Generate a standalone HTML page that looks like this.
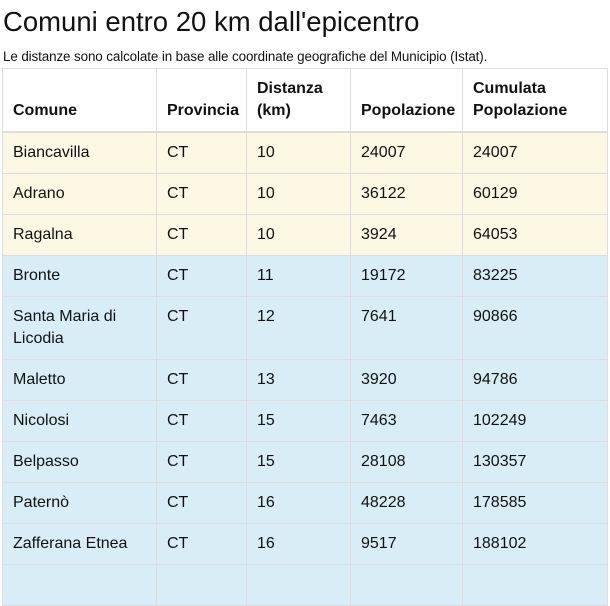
<!DOCTYPE html>
<html><head><meta charset="utf-8"><style>
body{margin:0;background:#fff;font-family:"Liberation Sans",Arial,sans-serif;color:#111;width:610px;height:567px;overflow:hidden}
h1{font-weight:normal;font-size:27.5px;margin:0;position:absolute;left:3px;top:5px;line-height:34px}
p{position:absolute;left:3px;top:49px;margin:0;font-size:13.4px;line-height:16px;letter-spacing:-0.1px}
table{position:absolute;left:2px;top:68px;border-collapse:collapse;width:606px;font-size:16px;table-layout:fixed}
td,th{border:1px solid #ddd;padding:9px 10px;line-height:22px;text-align:left;vertical-align:top;overflow:hidden}
th{vertical-align:bottom;border-bottom:2px solid #ddd;font-weight:bold}
tr.y td{background:#fcf8e3}tr.b td{background:#d9edf7}
</style></head><body>
<h1>Comuni entro 20 km dall'epicentro</h1>
<p>Le distanze sono calcolate in base alle coordinate geografiche del Municipio (Istat).</p>
<table>
<colgroup><col style="width:154px"><col style="width:90px"><col style="width:104px"><col style="width:112px"><col></colgroup>
<tr><th>Comune</th><th>Provincia</th><th>Distanza<br>(km)</th><th>Popolazione</th><th>Cumulata<br>Popolazione</th></tr>
<tr class="y"><td>Biancavilla</td><td>CT</td><td>10</td><td>24007</td><td>24007</td></tr>
<tr class="y"><td>Adrano</td><td>CT</td><td>10</td><td>36122</td><td>60129</td></tr>
<tr class="y"><td>Ragalna</td><td>CT</td><td>10</td><td>3924</td><td>64053</td></tr>
<tr class="b"><td>Bronte</td><td>CT</td><td>11</td><td>19172</td><td>83225</td></tr>
<tr class="b"><td>Santa Maria di Licodia</td><td>CT</td><td>12</td><td>7641</td><td>90866</td></tr>
<tr class="b"><td>Maletto</td><td>CT</td><td>13</td><td>3920</td><td>94786</td></tr>
<tr class="b"><td>Nicolosi</td><td>CT</td><td>15</td><td>7463</td><td>102249</td></tr>
<tr class="b"><td>Belpasso</td><td>CT</td><td>15</td><td>28108</td><td>130357</td></tr>
<tr class="b"><td>Paternò</td><td>CT</td><td>16</td><td>48228</td><td>178585</td></tr>
<tr class="b"><td>Zafferana Etnea</td><td>CT</td><td>16</td><td>9517</td><td>188102</td></tr>
<tr class="b"><td>&nbsp;</td><td></td><td></td><td></td><td></td></tr>
</table>
</body></html>
